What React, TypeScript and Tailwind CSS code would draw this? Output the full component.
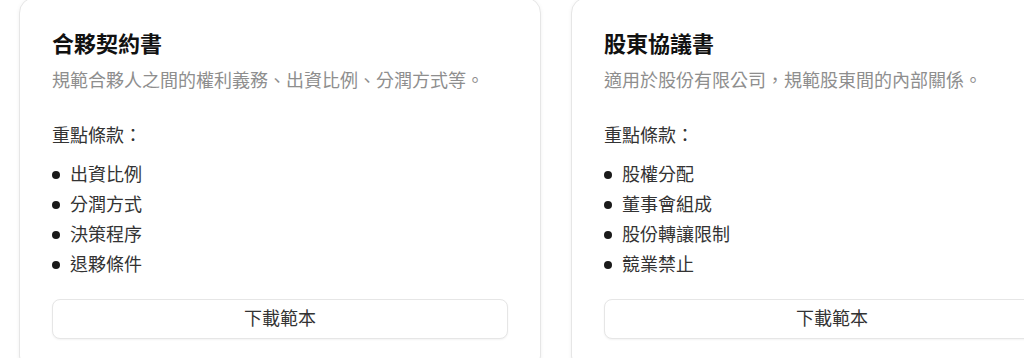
import React from 'react';

type Template = {
  title: string;
  description: string;
  clauses: string[];
};

const templates: Template[] = [
  {
    title: '合夥契約書',
    description: '規範合夥人之間的權利義務、出資比例、分潤方式等。',
    clauses: ['出資比例', '分潤方式', '決策程序', '退夥條件'],
  },
  {
    title: '股東協議書',
    description: '適用於股份有限公司，規範股東間的內部關係。',
    clauses: ['股權分配', '董事會組成', '股份轉讓限制', '競業禁止'],
  },
];

const TemplateCard: React.FC<{ template: Template }> = ({ template }) => (
  <div className="w-[522px] shrink-0 rounded-2xl border border-[#e6e6e6] bg-white p-8 shadow-[0_1px_4px_rgba(0,0,0,0.06)]">
    <h3 className="text-[22px] leading-[30px] font-bold text-[#111]">{template.title}</h3>
    <p className="mt-[7px] text-lg leading-7 text-[#8e8e8e]">{template.description}</p>

    <div className="mt-[27px]">
      <h4 className="text-lg leading-7 text-[#333]">重點條款：</h4>
      <ul className="mt-[11px] space-y-0.5">
        {template.clauses.map((clause) => (
          <li key={clause} className="flex items-center gap-2.5 text-lg leading-7 text-[#333]">
            <span className="h-2 w-2 shrink-0 rounded-full bg-[#1a1a1a]" />
            {clause}
          </li>
        ))}
      </ul>
    </div>

    <button className="mt-5 flex h-10 w-full items-center justify-center rounded-lg border border-[#e6e6e6] bg-white text-lg text-[#333] shadow-[0_1px_2px_rgba(0,0,0,0.05)]">
      下載範本
    </button>
  </div>
);

export default function App() {
  return (
    <div
      className="h-[358px] w-[1024px] overflow-hidden bg-white"
      style={{ fontFamily: '"Liberation Sans", "Noto Sans CJK TC", sans-serif' }}
    >
      <div className="-mt-[3px] flex gap-[30px] pl-[19px]">
        {templates.map((t) => (
          <TemplateCard key={t.title} template={t} />
        ))}
      </div>
    </div>
  );
}
